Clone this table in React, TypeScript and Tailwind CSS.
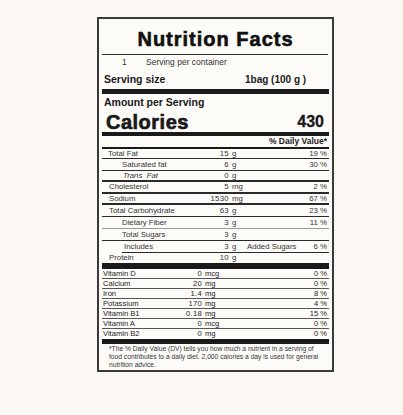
import cn from "clsx"

type Nutrient = {
  label: string
  num: string
  unit: string
  pct?: string
  extra?: string
  rowCls: string
  labelCls: string
}

const nutrients: Nutrient[] = [
  { label: "Total Fat", num: "15", unit: "g", pct: "19 %", rowCls: "h-[10px] border-b border-[#2a2a2a]", labelCls: "w-[95px] pl-[6px]" },
  { label: "Saturated fat", num: "6", unit: "g", pct: "30 %", rowCls: "h-[12px] border-b border-[#2a2a2a]", labelCls: "w-[95px] pl-[20px]" },
  { label: "Trans  Fat", num: "0", unit: "g", rowCls: "h-[11px] border-b-2 border-[#2a2a2a]", labelCls: "w-[95px] pl-[21px] italic" },
  { label: "Cholesterol", num: "5", unit: "mg", pct: "2 %", rowCls: "h-[12px] border-b-2 border-[#2a2a2a]", labelCls: "w-[95px] pl-[7px]" },
  { label: "Sodium", num: "1530", unit: "mg", pct: "67 %", rowCls: "h-[11px] border-b-2 border-[#2a2a2a]", labelCls: "w-[95px] pl-[7px]" },
  { label: "Total Carbohydrate", num: "63", unit: "g", pct: "23 %", rowCls: "h-[12px] border-b border-[#2a2a2a]", labelCls: "w-[95px] pl-[7px]" },
  { label: "Dietary Fiber", num: "3", unit: "g", pct: "11 %", rowCls: "h-[12px] border-b border-[#9a9a9a]", labelCls: "w-[95px] pl-[20px]" },
  { label: "Total Sugars", num: "3", unit: "g", rowCls: "h-[12px] border-b border-[#2a2a2a]", labelCls: "w-[95px] pl-[20px]" },
  { label: "Includes", num: "3", unit: "g", extra: "Added Sugars", pct: "6 %", rowCls: "ml-[20px] h-[12px] border-b border-[#2a2a2a]", labelCls: "w-[75px] pl-[2px]" },
  { label: "Protein", num: "10", unit: "g", rowCls: "h-[10px]", labelCls: "w-[95px] pl-[7px]" },
]

const vitamins = [
  { label: "Vitamin D", num: "0", unit: "mcg", pct: "0 %" },
  { label: "Calcium", num: "20", unit: "mg", pct: "0 %" },
  { label: "Iron", num: "1.4", unit: "mg", pct: "8 %" },
  { label: "Potassium", num: "170", unit: "mg", pct: "4 %" },
  { label: "Vitamin B1", num: "0.18", unit: "mg", pct: "15 %" },
  { label: "Vitamin A", num: "0", unit: "mcg", pct: "0 %" },
  { label: "Vitamin B2", num: "0", unit: "mg", pct: "0 %" },
]

export default function App() {
  return (
    <div className="w-[403px] h-[415px] bg-[#fbf8f3] pt-[17px] pl-[97px] font-['Liberation_Sans',Arial,sans-serif] text-[#1a1a1a]">
      <div className="w-[237px] h-[355px] border-2 border-[#3a3a3a] bg-[#fdfbf8] px-[3px] flex flex-col">
        {/* title */}
        <div className="h-[35px] pt-[8px] text-center text-[20px] leading-[24px] font-bold tracking-[1px] text-[#111] [-webkit-text-stroke:0.6px_#111]">
          Nutrition Facts
        </div>
        <div className="h-px bg-[#2a2a2a] mr-px" />

        <div className="h-[15px] flex items-center text-[8.5px] text-[#333]">
          <span className="pl-[20px] w-[44px]">1</span>
          <span>Serving per container</span>
        </div>
        <div className="h-[19px] flex items-center text-[10.5px] font-bold">
          <span className="pl-[2px] w-[143px]">Serving size</span>
          <span className="text-[10px]">1bag (100 g )</span>
        </div>
        <div className="h-[5px] bg-[#1a1a1a]" />

        <div className="h-[17px] flex items-center pl-[2px] text-[10.5px] font-bold">Amount per Serving</div>
        <div className="h-[21px] flex items-end justify-between">
          <span className="pl-[4px] text-[20px] leading-none font-bold tracking-[0.5px] [-webkit-text-stroke:0.6px_#111]">Calories</span>
          <span className="pr-[5px] pb-[2px] text-[16px] leading-none font-bold [-webkit-text-stroke:0.3px_#111]">430</span>
        </div>
        <div className="h-[4px] bg-[#1a1a1a]" />

        <div className="h-[11px] flex items-center justify-end pr-[2px] text-[8.5px] font-bold">% Daily Value*</div>
        <div className="h-[2px] bg-[#1a1a1a]" />

        {nutrients.map((n) => (
          <div key={n.label} className={cn("flex items-center text-[7.8px] text-[#333] shrink-0", n.rowCls)}>
            <div className={cn("shrink-0 whitespace-pre", n.labelCls)}>{n.label}</div>
            <div className="w-[32px] text-right tracking-[0.3px]">{n.num}</div>
            <div className="w-[14px] pl-[3px]">{n.unit}</div>
            <div className="flex-1 pl-[4px]">{n.extra}</div>
            <div className="pr-[2px]">{n.pct}</div>
          </div>
        ))}
        <div className="h-[6px] bg-[#1a1a1a]" />

        {vitamins.map((v, i) => (
          <div
            key={v.label}
            className={cn(
              "h-[10px] flex items-center text-[7.6px] text-[#222] shrink-0",
              i < vitamins.length - 1 && "border-b border-[#555]"
            )}
          >
            <div className="w-[70px] pl-[1px]">{v.label}</div>
            <div className="w-[30px] text-right tracking-[0.3px]">{v.num}</div>
            <div className="flex-1 pl-[3px]">{v.unit}</div>
            <div className="pr-[2px]">{v.pct}</div>
          </div>
        ))}
        <div className="h-[5px] bg-[#1a1a1a]" />

        <p className="pt-[1px] pl-[7px] text-[6.7px] leading-[8px] text-[#333]">
          *The % Daily Value (DV) tells you how much a nutrient in a serving of
          <br />
          food contributes to a daily diet. 2,000 calories a day is used for general
          <br />
          nutrition advice.
        </p>
      </div>
    </div>
  )
}
